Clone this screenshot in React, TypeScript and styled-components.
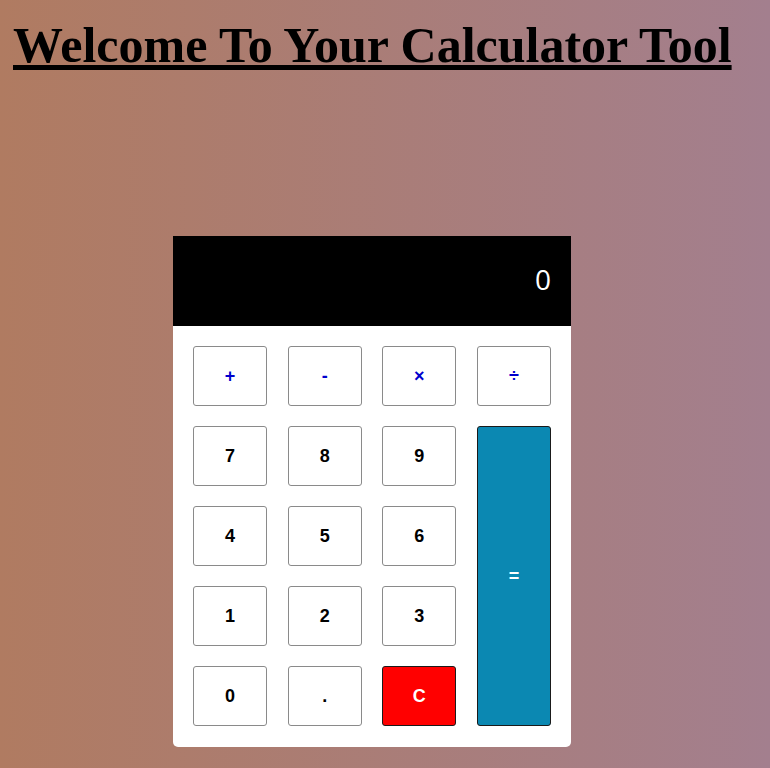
import React from "react";
import styled, { createGlobalStyle } from "styled-components";

const GlobalStyle = createGlobalStyle`
  html, body {
    margin: 0;
    padding: 0;
    min-height: 100%;
  }
  html {
    background: linear-gradient(to right, #b07b61, #a37f8e);
  }
  body {
    min-height: 100vh;
    background: linear-gradient(to right, #b07b61, #a37f8e);
    font-family: "Liberation Serif", "Times New Roman", serif;
  }
`;

const Page = styled.div`
  padding: 18px 13px 20px 13px;
`;

const Title = styled.h1`
  margin: 0;
  font-family: "Liberation Serif", "Times New Roman", serif;
  font-size: 50px;
  font-weight: bold;
  text-decoration: underline;
  color: #000;
  line-height: 55px;
  white-space: nowrap;
`;

const Main = styled.main`
  display: flex;
  justify-content: center;
  margin-top: 163px;
  margin-left: -13px;
  margin-right: 13px;
`;

const Card = styled.div`
  width: 398px;
  background: #fff;
  border-radius: 0 0 5px 5px;
  overflow: hidden;
`;

const Display = styled.div`
  height: 90px;
  box-sizing: border-box;
  background: #000;
  color: #fff;
  display: flex;
  align-items: center;
  justify-content: flex-end;
  padding: 0 20px 5px 20px;
  font-family: "Open Sans", "Noto Sans", sans-serif;
  font-size: 28px;
`;

const Keys = styled.div`
  display: grid;
  grid-template-columns: repeat(4, 1fr);
  grid-auto-rows: 60px;
  gap: 20px 20.5px;
  padding: 20px 20px 21px 20px;
`;

type Variant = "num" | "op" | "eq" | "clear";

const Key = styled.button<{ $variant: Variant; $span?: number }>`
  grid-row: ${(p) => (p.$span ? `span ${p.$span}` : "auto")};
  font-family: "Liberation Sans", Arial, sans-serif;
  font-size: 18px;
  font-weight: bold;
  border-radius: 3px;
  cursor: pointer;
  padding: 0;
  border: 1px solid
    ${(p) => (p.$variant === "eq" || p.$variant === "clear" ? "#1a1a1a" : "#8a8a8a")};
  background: ${(p) =>
    p.$variant === "eq" ? "#0b88b2" : p.$variant === "clear" ? "#ff0000" : "#fff"};
  color: ${(p) =>
    p.$variant === "op" ? "#0000cd" : p.$variant === "num" ? "#000" : "#fff"};
`;

const keys: { label: string; variant: Variant; span?: number }[] = [
  { label: "+", variant: "op" },
  { label: "-", variant: "op" },
  { label: "×", variant: "op" },
  { label: "÷", variant: "op" },
  { label: "7", variant: "num" },
  { label: "8", variant: "num" },
  { label: "9", variant: "num" },
  { label: "=", variant: "eq", span: 4 },
  { label: "4", variant: "num" },
  { label: "5", variant: "num" },
  { label: "6", variant: "num" },
  { label: "1", variant: "num" },
  { label: "2", variant: "num" },
  { label: "3", variant: "num" },
  { label: "0", variant: "num" },
  { label: ".", variant: "num" },
  { label: "C", variant: "clear" },
];

export default function App() {
  return (
    <>
      <GlobalStyle />
      <Page>
        <Title>Welcome To Your Calculator Tool</Title>
        <Main>
          <Card>
            <Display>0</Display>
            <Keys>
              {keys.map((k) => (
                <Key key={k.label} $variant={k.variant} $span={k.span}>
                  {k.label}
                </Key>
              ))}
            </Keys>
          </Card>
        </Main>
      </Page>
    </>
  );
}
